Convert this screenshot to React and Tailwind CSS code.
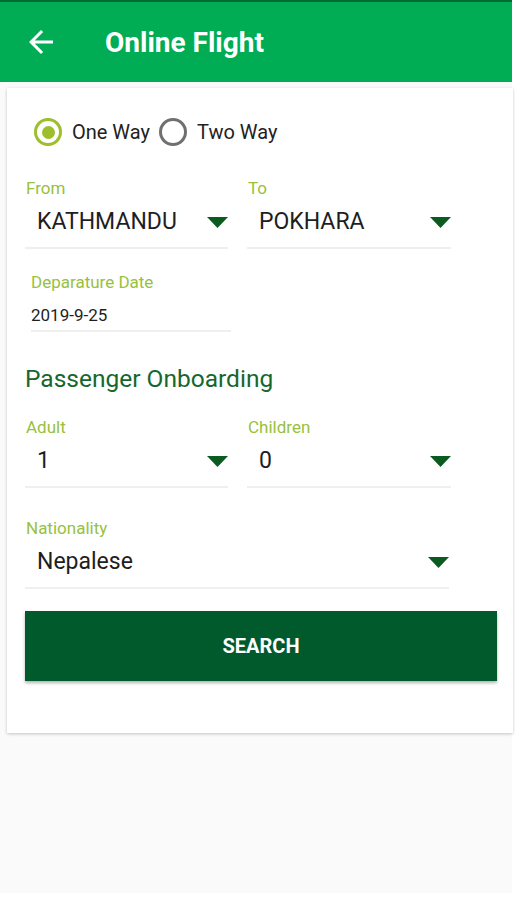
import React from 'react';

const font = { fontFamily: 'Roboto, "Noto Sans", Arial, sans-serif' };

function Caret() {
    return (
        <svg width="21" height="11" viewBox="0 0 21 11" className="shrink-0">
            <path d="M0 0H21L10.5 11Z" fill="#0b5a1f" />
        </svg>
    );
}

function Dropdown({ label, value }) {
    return (
        <div className="flex flex-col">
            <div className="h-[20px] leading-[20px] text-[17px] text-[#97c13e] pl-[1px]">{label}</div>
            <div className="mt-[4px] h-[40px] flex items-center justify-between pl-[12px]">
                <span className="text-[23px] text-[#1e1e1e]">{value}</span>
                <Caret />
            </div>
            <div className="mt-[5px] h-[2px] bg-[#efefef]"></div>
        </div>
    );
}

function Radio({ checked, label }) {
    return (
        <div className="flex items-center">
            {checked ? (
                <div className="w-[28px] h-[28px] rounded-full border-[3px] border-[#9dbf2e] flex items-center justify-center">
                    <div className="w-[13px] h-[13px] rounded-full bg-[#9dbf2e]"></div>
                </div>
            ) : (
                <div className="w-[28px] h-[28px] rounded-full border-[3px] border-[#707070]"></div>
            )}
            <span className="ml-[10px] text-[20px] text-[#222]">{label}</span>
        </div>
    );
}

export default function App() {
    return (
        <div className="w-[515px] h-[900px] bg-white" style={font}>
            <div className="w-[512px] h-[893px] bg-[#fafafa] flex flex-col">
                {/* Status strip + app bar */}
                <div className="h-[2px] bg-[#006b35]"></div>
                <div className="h-[80px] bg-[#00ad55] flex items-center">
                    <svg width="36" height="36" viewBox="0 0 24 24" className="ml-[23px]">
                        <path d="M20 11H7.83l5.59-5.59L12 4l-8 8 8 8 1.41-1.41L7.83 13H20v-2z" fill="#fff" />
                    </svg>
                    <span className="ml-[46px] mt-[2px] text-[28px] font-bold text-white">Online Flight</span>
                </div>

                {/* Form card */}
                <div className="mt-[6px] ml-[7px] mr-[-1px] bg-white shadow-[0_1px_3px_rgba(0,0,0,0.22)] pl-[18px] pr-[16px] pt-[29px] pb-[52px]">
                    <div className="flex items-center gap-[9px] pl-[9px]">
                        <Radio checked label="One Way" />
                        <Radio label="Two Way" />
                    </div>

                    <div className="mt-[31px] grid grid-cols-[203px_204px] gap-x-[19px]">
                        <Dropdown label="From" value="KATHMANDU" />
                        <Dropdown label="To" value="POKHARA" />
                    </div>

                    <div className="mt-[23px] ml-[6px] w-[200px] flex flex-col">
                        <div className="h-[20px] leading-[20px] text-[17px] text-[#97c13e]">Deparature Date</div>
                        <div className="mt-[11px] h-[24px] leading-[24px] text-[17px] text-[#1e1e1e]">2019-9-25</div>
                        <div className="mt-[3px] h-[2px] bg-[#efefef]"></div>
                    </div>

                    <div className="mt-[33px] h-[28px] leading-[28px] text-[24.5px] text-[#16672c]">Passenger Onboarding</div>

                    <div className="mt-[24px] grid grid-cols-[203px_204px] gap-x-[19px]">
                        <Dropdown label="Adult" value="1" />
                        <Dropdown label="Children" value="0" />
                    </div>

                    <div className="mt-[30px] w-[424px]">
                        <Dropdown label="Nationality" value="Nepalese" />
                    </div>

                    <button className="mt-[22px] w-[472px] h-[70px] bg-[#005a2c] text-white text-[20px] font-bold shadow-[0_2px_3px_rgba(0,0,0,0.3)] flex items-center justify-center">
                        SEARCH
                    </button>
                </div>
            </div>
        </div>
    );
}
